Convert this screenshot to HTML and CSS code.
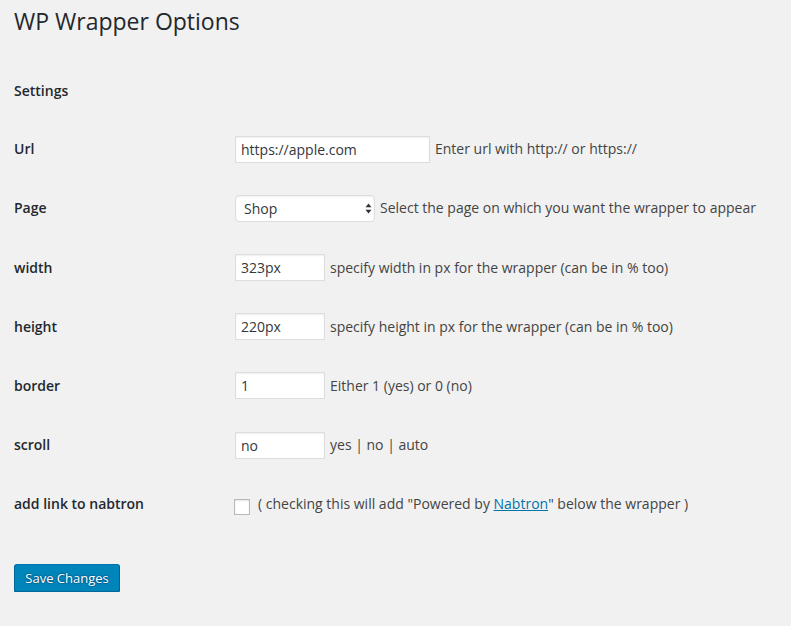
FILE: index.html
```html
<!DOCTYPE html>
<html>
<head>
<meta charset="utf-8">
<link rel="stylesheet" href="styles.css">
</head>
<body>
<div class="wrap">
  <h1 class="title">WP Wrapper Options</h1>
  <h2 class="section">Settings</h2>
  <form class="form-table">
    <div class="row">
      <div class="th">Url</div>
      <div class="td"><input class="input url" type="text" value="https://apple.com"><span class="desc">Enter url with http:// or https://</span></div>
    </div>
    <div class="row">
      <div class="th">Page</div>
      <div class="td">
        <span class="select-wrap">
          <select class="select"><option>Shop</option></select>
          <svg class="arrows" width="7" height="11" viewBox="0 0 7 11"><path d="M3.5 0.5 L6.5 4.2 L0.5 4.2 Z M3.5 10.5 L6.5 6.8 L0.5 6.8 Z" fill="#333"/></svg>
        </span>
        <span class="desc">Select the page on which you want the wrapper to appear</span>
      </div>
    </div>
    <div class="row">
      <div class="th">width</div>
      <div class="td"><input class="input small" type="text" value="323px"><span class="desc">specify width in px for the wrapper (can be in % too)</span></div>
    </div>
    <div class="row">
      <div class="th">height</div>
      <div class="td"><input class="input small" type="text" value="220px"><span class="desc">specify height in px for the wrapper (can be in % too)</span></div>
    </div>
    <div class="row">
      <div class="th">border</div>
      <div class="td"><input class="input small" type="text" value="1"><span class="desc">Either 1 (yes) or 0 (no)</span></div>
    </div>
    <div class="row">
      <div class="th">scroll</div>
      <div class="td"><input class="input small" type="text" value="no"><span class="desc">yes | no | auto</span></div>
    </div>
    <div class="row">
      <div class="th">add link to nabtron</div>
      <div class="td"><span class="checkbox"></span><span class="desc cb-desc">( checking this will add "Powered by <a href="#" class="link">Nabtron</a>" below the wrapper )</span></div>
    </div>
    <div class="submit"><button type="button" class="button">Save Changes</button></div>
  </form>
</div>
</body>
</html>
```

FILE: styles.css
```css
html, body {
  margin: 0;
  padding: 0;
  background: #f1f1f1;
}
body {
  font-family: "Open Sans", "Liberation Sans", sans-serif;
  color: #444;
  font-size: 14px;
}
.wrap {
  padding: 7px 14px 0 14px;
}
.title {
  margin: 0;
  font-size: 23px;
  font-weight: 400;
  line-height: 29px;
  color: #23282d;
}
.section {
  margin: 45px 0 0 0;
  font-size: 14px;
  font-weight: 600;
  line-height: 19.6px;
  color: #23282d;
}
.form-table {
  margin-top: 19px;
  display: flex;
  flex-direction: column;
}
.row {
  display: grid;
  grid-template-columns: 220px 1fr;
  align-items: center;
  height: 59.2px;
}
.th {
  font-weight: 600;
  color: #23282d;
  line-height: 20px;
}
.td {
  display: flex;
  align-items: center;
  gap: 5px;
  white-space: nowrap;
}
.input {
  margin: 0 0 0 1px;
  box-sizing: border-box;
  height: 27px;
  border: 1px solid #ddd;
  background: #fff;
  box-shadow: inset 0 1px 2px rgba(0,0,0,.07);
  padding: 0 5px;
  font-family: "Open Sans", "Liberation Sans", sans-serif;
  font-size: 14px;
  color: #32373c;
  outline: none;
}
.url { width: 195px; }
.small { width: 90px; }
.select-wrap {
  position: relative;
  display: inline-block;
  margin-left: 1px;
  height: 27px;
}
.select {
  -webkit-appearance: none;
  appearance: none;
  box-sizing: border-box;
  width: 140px;
  height: 27px;
  border: 1px solid #ddd;
  border-radius: 4px;
  background: #fff;
  padding: 0 8px;
  font-family: "Open Sans", "Liberation Sans", sans-serif;
  font-size: 14px;
  color: #32373c;
  box-shadow: inset 0 1px 2px rgba(0,0,0,.07);
}
.arrows {
  position: absolute;
  right: 3px;
  top: 8px;
}
.desc {
  line-height: 20px;
}
.checkbox {
  display: inline-block;
  box-sizing: border-box;
  width: 16px;
  height: 16px;
  border: 1px solid #b4b9be;
  background: #fff;
  box-shadow: inset 0 1px 2px rgba(0,0,0,.1);
  margin-top: 6px;
}
.cb-desc { margin-left: 3px; }
.link {
  color: #0073aa;
  text-decoration: underline;
}
.submit {
  margin-top: 30px;
}
.button {
  box-sizing: border-box;
  width: 106px;
  height: 28px;
  background: #0085ba;
  border: 1px solid;
  border-color: #0073aa #006799 #006799;
  border-radius: 3px;
  box-shadow: 0 1px 0 #006799;
  color: #fff;
  font-family: "Open Sans", "Liberation Sans", sans-serif;
  font-size: 13px;
  padding: 0 10px;
  line-height: 26px;
  text-shadow: 0 -1px 1px #006799, 1px 0 1px #006799, 0 1px 1px #006799, -1px 0 1px #006799;
}
```
